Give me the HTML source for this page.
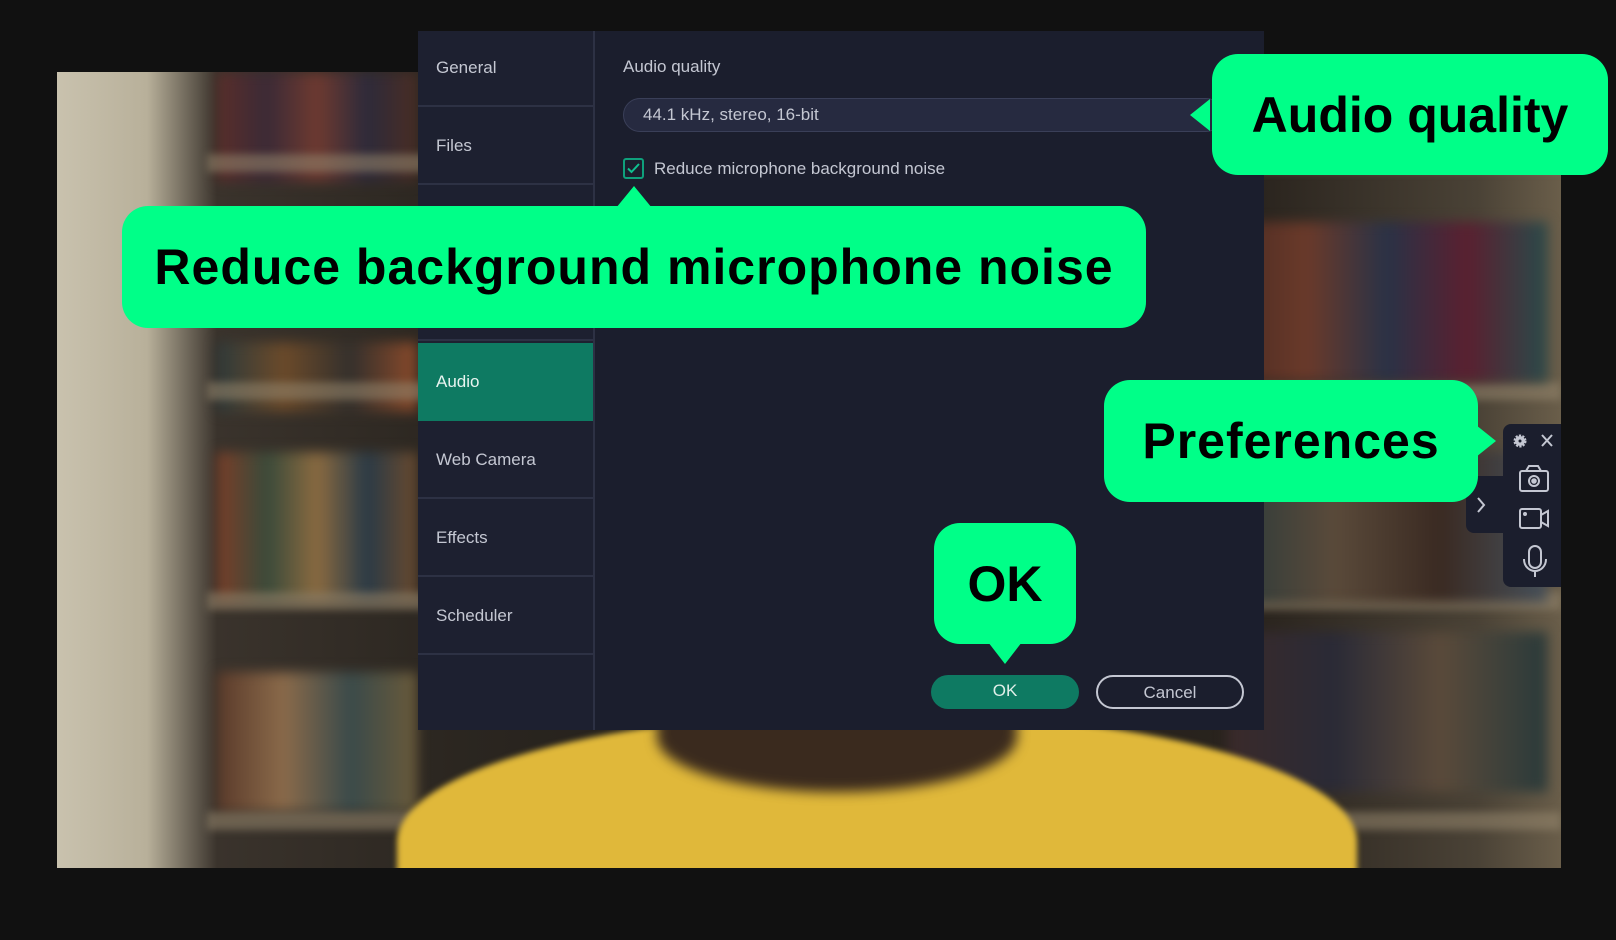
<!DOCTYPE html>
<html><head><meta charset="utf-8"><style>
*{margin:0;padding:0;box-sizing:border-box}
body{width:1616px;height:940px;background:#111111;position:relative;overflow:hidden;font-family:"Liberation Sans",sans-serif}
.photo{position:absolute;left:57px;top:72px;width:1504px;height:796px;overflow:hidden;
background:linear-gradient(90deg,#c9c2ae 0,#b8b09a 90px,#3a332c 160px,#2b2620 400px,#1e1b18 800px,#2a241e 1200px,#4a4236 1420px,#6a5e4a 1504px)}
.shelf{position:absolute;left:150px;width:1354px;height:18px;background:rgba(150,135,110,.55);filter:blur(4px)}
.books{position:absolute;filter:blur(6px)}
.sweater{position:absolute;left:340px;top:640px;width:960px;height:260px;border-radius:50% 50% 0 0;background:#e0b83a;filter:blur(3px)}
.neck{position:absolute;left:600px;top:610px;width:360px;height:110px;border-radius:0 0 50% 50%;background:#3a2a1e;filter:blur(6px)}
.dlg{position:absolute;left:418px;top:31px;width:846px;height:699px;background:#1b1e2d}
.side{position:absolute;left:0;top:0;width:177px;height:699px;background:#1d2030;border-right:2px solid #2d3144}
.it{position:absolute;left:0;width:175px;height:76px;border-bottom:2px solid #2d3144;color:#c4c7d2;font-size:17px;padding-left:18px;display:flex;align-items:center}
.it.act{background:#0e7a62;color:#e8f4f0;border:none}
.lbl{position:absolute;color:#c4c7d2;font-size:17px}
.dd{position:absolute;left:205px;top:67px;width:600px;height:34px;border-radius:17px;background:#262a40;border:1px solid #3a3f58;color:#c4c7d2;font-size:17px;padding-left:19px;line-height:32px}
.cb{position:absolute;left:205px;top:127px;width:21px;height:21px;border:2px solid #0fa07c;border-radius:3px}
.btn{position:absolute;top:644px;width:148px;height:34px;border-radius:17px;font-size:17px;text-align:center;line-height:32px}
.bub{position:absolute;background:#00ff88;border-radius:26px;color:#000;font-weight:bold;display:flex;align-items:center;justify-content:center}
.tri{position:absolute;width:0;height:0}
.tb{position:absolute;background:#1b1e2d}
svg{position:absolute}
</style></head><body>
<div class="photo">
 <div class="books" style="left:160px;top:0;width:200px;height:110px;background:linear-gradient(90deg,#5a2e2a,#3b2a36,#6e3a30,#2d2a3a,#4a2d24)"></div>
 <div class="shelf" style="top:82px"></div>
 <div class="books" style="left:160px;top:270px;width:200px;height:70px;background:linear-gradient(90deg,#2e3a3a,#6b4a2a,#34302c,#8a4a2a)"></div>
 <div class="shelf" style="top:310px"></div>
 <div class="books" style="left:160px;top:380px;width:200px;height:150px;background:linear-gradient(90deg,#7a3e28,#3a4a3a,#8a6a40,#2a3a46,#6a4a2e)"></div>
 <div class="shelf" style="top:520px"></div>
 <div class="books" style="left:160px;top:600px;width:200px;height:140px;background:linear-gradient(90deg,#5a3a2a,#8a6a4a,#3a4a4a,#6a5a3a)"></div>
 <div class="shelf" style="top:740px"></div>
 <div class="books" style="left:1170px;top:150px;width:320px;height:160px;background:linear-gradient(90deg,#4a2a22,#6a3a2a,#2a3246,#5a2030,#2a4a4a)"></div>
 <div class="books" style="left:1170px;top:380px;width:320px;height:150px;background:linear-gradient(90deg,#2a3a3a,#5a4a3a,#3a2a22,#46505a)"></div>
 <div class="books" style="left:1170px;top:560px;width:320px;height:160px;background:linear-gradient(90deg,#3a2a2a,#2a2a36,#5a4a3a,#2a3a3a)"></div>
 <div class="sweater"></div><div class="neck"></div>
</div>
<div class="dlg">
 <div class="side">
  <div class="it" style="top:0">General</div>
  <div class="it" style="top:78px">Files</div>
  <div class="it" style="top:156px"></div>
  <div class="it" style="top:234px"></div>
  <div class="it act" style="top:312px;height:78px">Audio</div>
  <div class="it" style="top:392px">Web Camera</div>
  <div class="it" style="top:470px">Effects</div>
  <div class="it" style="top:548px">Scheduler</div>
 </div>
 <div class="lbl" style="left:205px;top:26px">Audio quality</div>
 <div class="dd">44.1 kHz, stereo, 16-bit</div>
 <div class="cb"><svg width="17" height="17" viewBox="0 0 17 17" style="left:0;top:0"><path d="M3 8.5l3.5 3.5L14 4" stroke="#0fc090" stroke-width="2" fill="none"/></svg></div>
 <div class="lbl" style="left:236px;top:128px">Reduce microphone background noise</div>
 <div class="btn" style="left:513px;background:#0e7a62;color:#e0efe9">OK</div>
 <div class="btn" style="left:678px;border:2px solid #c4c7d2;color:#c4c7d2">Cancel</div>
</div>
<div class="tb" style="left:1503px;top:424px;width:58px;height:163px;border-radius:8px 0 0 8px"></div>
<div class="tb" style="left:1466px;top:476px;width:40px;height:57px;border-radius:8px 0 0 8px"></div>
<svg width="160" height="180" style="left:1460px;top:420px" viewBox="0 0 160 180" fill="none" stroke="#c4c7d2" stroke-width="2">
 <circle cx="60" cy="21" r="5" fill="#c4c7d2" stroke-dasharray="2 1.2" stroke-width="3"/><circle cx="60" cy="21" r="1.5" fill="#1b1e2d" stroke="none"/>
 <path d="M82 15l10 11M92 15l-10 11"/>
 <rect x="60" y="51" width="28" height="20" rx="2"/><path d="M66 51l3-5h9l3 5"/><circle cx="74" cy="61" r="5"/><circle cx="74" cy="61" r="1.8" fill="#c4c7d2"/>
 <rect x="60" y="89" width="21" height="19" rx="2"/><path d="M81 95l7-4v15l-7-4"/><circle cx="65" cy="94" r="1" fill="#c4c7d2"/>
 <rect x="69" y="126" width="12" height="22" rx="6"/><path d="M64 139c0 8 6 12 11 12s11-4 11-12M75 151v6"/>
 <path d="M18 78l6 7-6 7"/>
</svg>
<div class="tri" style="left:1190px;top:99px;border-top:16px solid transparent;border-bottom:16px solid transparent;border-right:20px solid #00ff88"></div>
<div class="bub" style="left:1212px;top:54px;width:396px;height:121px;font-size:50px">Audio quality</div>
<div class="tri" style="left:616px;top:186px;border-left:18px solid transparent;border-right:18px solid transparent;border-bottom:22px solid #00ff88"></div>
<div class="bub" style="left:122px;top:206px;width:1024px;height:122px;font-size:50px;letter-spacing:1px">Reduce background microphone noise</div>
<div class="tri" style="left:1476px;top:425px;border-top:16px solid transparent;border-bottom:16px solid transparent;border-left:20px solid #00ff88"></div>
<div class="bub" style="left:1104px;top:380px;width:374px;height:122px;font-size:50px;letter-spacing:1px">Preferences</div>
<div class="tri" style="left:988px;top:642px;border-left:17px solid transparent;border-right:17px solid transparent;border-top:22px solid #00ff88"></div>
<div class="bub" style="left:934px;top:523px;width:142px;height:121px;font-size:50px">OK</div>
</body></html>
